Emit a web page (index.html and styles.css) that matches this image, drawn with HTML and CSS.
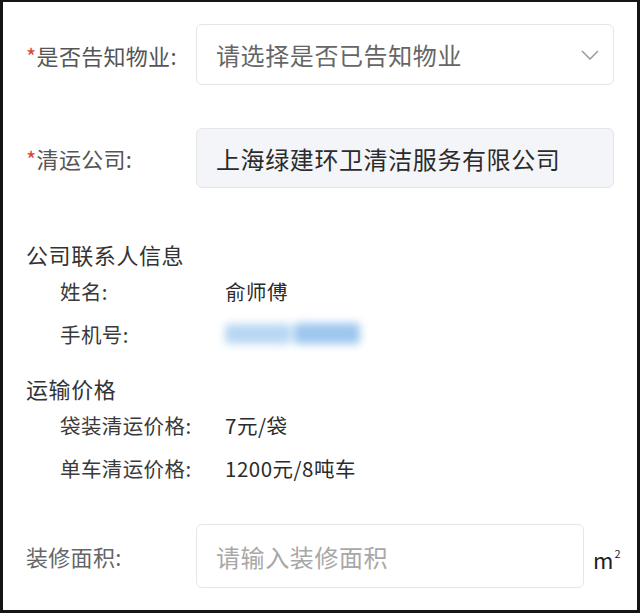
FILE: index.html
```html
<!DOCTYPE html>
<html lang="zh-CN">
<head>
<meta charset="utf-8">
<link rel="stylesheet" href="styles.css">
</head>
<body>
<div class="frame">
  <div class="form-row first">
    <div class="label"><span class="req">*</span>是否告知物业:</div>
    <div class="field select">
      <span class="placeholder-dark">请选择是否已告知物业</span>
      <svg class="chev" width="18" height="10" viewBox="0 0 18 10"><path d="M1 1 L9 9 L17 1" fill="none" stroke="#9a9a9a" stroke-width="1.5"/></svg>
    </div>
  </div>
  <div class="form-row second">
    <div class="label"><span class="req">*</span>清运公司:</div>
    <div class="field filled">上海绿建环卫清洁服务有限公司</div>
  </div>

  <div class="section-title s1">公司联系人信息</div>
  <div class="info-row"><span class="info-label">姓名:</span><span class="info-value">俞师傅</span></div>
  <div class="info-row"><span class="info-label">手机号:</span><span class="info-value"><span class="blur"><span class="b1"></span><span class="b2"></span></span></span></div>

  <div class="section-title s2">运输价格</div>
  <div class="info-row"><span class="info-label">袋装清运价格:</span><span class="info-value">7元/袋</span></div>
  <div class="info-row"><span class="info-label">单车清运价格:</span><span class="info-value">1200元/8吨车</span></div>

  <div class="form-row last">
    <div class="label light">装修面积:</div>
    <div class="field input"><span class="placeholder">请输入装修面积</span></div>
    <div class="unit">m<sup>2</sup></div>
  </div>
</div>
</body>
</html>
```
FILE: styles.css
```css
* { box-sizing: border-box; }
html, body { margin: 0; padding: 0; background: #fff; }
body { font-family: "Noto Sans CJK SC", "Noto Sans", sans-serif; }
.frame {
  width: 640px;
  height: 613px;
  border: 3px solid #151515;
  border-top-width: 2px;
  padding: 22px 23px 0 23px;
  overflow: hidden;
  background: #fff;
}
.form-row { display: flex; align-items: center; }
.label {
  width: 170px;
  flex: none;
  font-size: 22px;
  color: #555;
  letter-spacing: 0.3px;
}
.label.light { color: #666; }
.req { color: #d9443d; }
.field {
  flex: 1;
  border: 1px solid #e6e6e6;
  border-radius: 6px;
  display: flex;
  align-items: center;
  padding-left: 19px;
  font-size: 24px;
  letter-spacing: 0.6px;
}
.select { height: 61px; justify-content: space-between; padding-right: 14px; }
.placeholder-dark { color: #666; }
.filled { height: 60px; background: #f4f5f8; color: #2b2b2b; }
.second { margin-top: 43px; }
.section-title {
  font-size: 22px;
  color: #333;
  line-height: 30px;
  letter-spacing: 0.6px;
}
.s1 { margin-top: 51px; }
.s2 { margin-top: 18px; }
.info-row {
  display: flex;
  align-items: center;
  height: 43px;
  padding-left: 34px;
  font-size: 20.5px;
  color: #333;
}
.info-label { width: 165px; flex: none; color: #3a3a3a; letter-spacing: 0.4px; }
.info-value { color: #2b2b2b; letter-spacing: 0.5px; }
.blur { display: flex; align-items: center; gap: 3px; width: 136px; height: 26px; filter: blur(4px); }
.b1 { display: block; width: 66px; height: 20px; background: #b7d7f2; border-radius: 4px; }
.b2 { display: block; width: 66px; height: 21px; background: #9dc7ee; border-radius: 4px; }
.last { margin-top: 35px; }
.input { height: 64px; flex: none; width: 388px; }
.placeholder { color: #a8a8a8; }
.unit {
  margin-left: 9px;
  font-size: 22px;
  color: #222;
  padding-top: 6px;
}
.unit sup { font-size: 11px; vertical-align: 11px; margin-left: 1px; }
```
